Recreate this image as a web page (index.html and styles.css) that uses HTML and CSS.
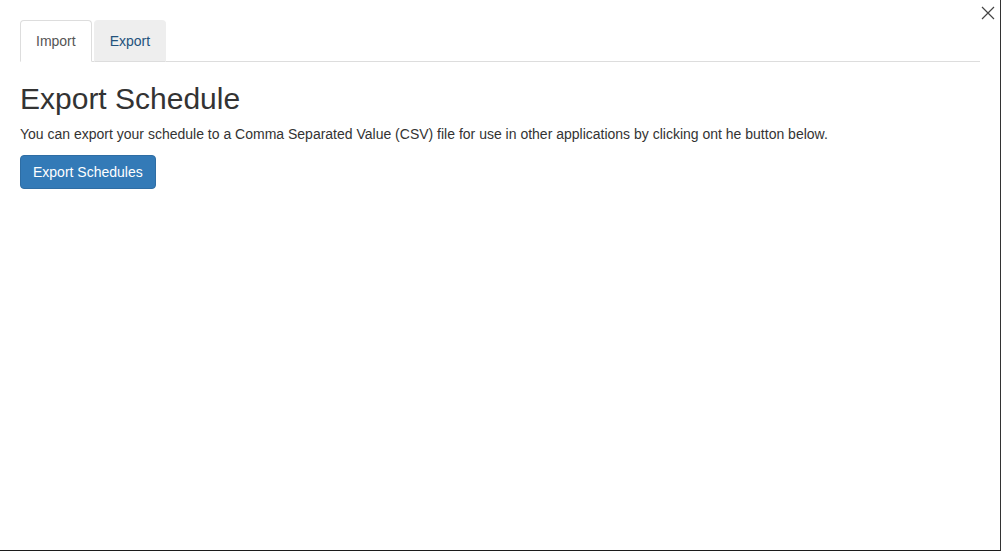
FILE: index.html
```html
<!DOCTYPE html>
<html lang="en">
<head>
<meta charset="utf-8">
<title>Export Schedule</title>
<link rel="stylesheet" href="styles.css">
</head>
<body>
<div class="frame">
  <button class="close" type="button" aria-label="Close">
    <svg width="14" height="14" viewBox="0 0 14 14"><path d="M1 1 L13 13 M13 1 L1 13" stroke="#444" stroke-width="1.2" fill="none"/></svg>
  </button>
  <ul class="nav-tabs">
    <li class="tab active"><a href="#">Import</a></li>
    <li class="tab hover"><a href="#">Export</a></li>
  </ul>
  <div class="tab-content">
    <h2 class="title">Export Schedule</h2>
    <p class="desc">You can export your schedule to a Comma Separated Value (CSV) file for use in other applications by clicking ont he button below.</p>
    <button class="btn-primary" type="button">Export Schedules</button>
  </div>
</div>
</body>
</html>
```
FILE: styles.css
```css
* { box-sizing: border-box; }
html, body { margin: 0; padding: 0; background: #fff; }
body {
  font-family: "Liberation Sans", Arial, Helvetica, sans-serif;
  font-size: 14px;
  line-height: 1.42857;
  color: #333;
}
.frame {
  position: relative;
  width: 1001px;
  height: 551px;
  padding: 20px 20px 0 20px;
  border-right: 1px solid #333;
  border-bottom: 1px solid #1c1c1c;
  overflow: hidden;
}
.close {
  position: absolute;
  top: 6px;
  right: 5px;
  width: 14px;
  height: 14px;
  padding: 0;
  border: 0;
  background: transparent;
  display: block;
}
.close svg { display: block; }
.nav-tabs {
  list-style: none;
  margin: 0;
  padding: 0;
  display: flex;
  border-bottom: 1px solid #ddd;
}
.tab { margin: 0 2px -1px 0; }
.tab a {
  display: block;
  padding: 10px 15px;
  line-height: 20px;
  border: 1px solid transparent;
  border-radius: 4px 4px 0 0;
  text-decoration: none;
  color: #337ab7;
}
.tab.active a {
  color: #555;
  background: #fff;
  border-color: #ddd #ddd transparent;
}
.tab.hover a {
  background: #eee;
  border-color: #eee #eee #ddd;
  color: #23527c;
}
.title {
  margin: 20px 0 10px;
  font-size: 30px;
  font-weight: 500;
  line-height: 1.1;
  color: #333;
}
.desc { margin: 0 0 10px; }
.btn-primary {
  display: inline-block;
  font-family: inherit;
  font-size: 14px;
  line-height: 20px;
  padding: 6px 12px;
  color: #fff;
  background: #337ab7;
  border: 1px solid #2e6da4;
  border-radius: 4px;
}
```
